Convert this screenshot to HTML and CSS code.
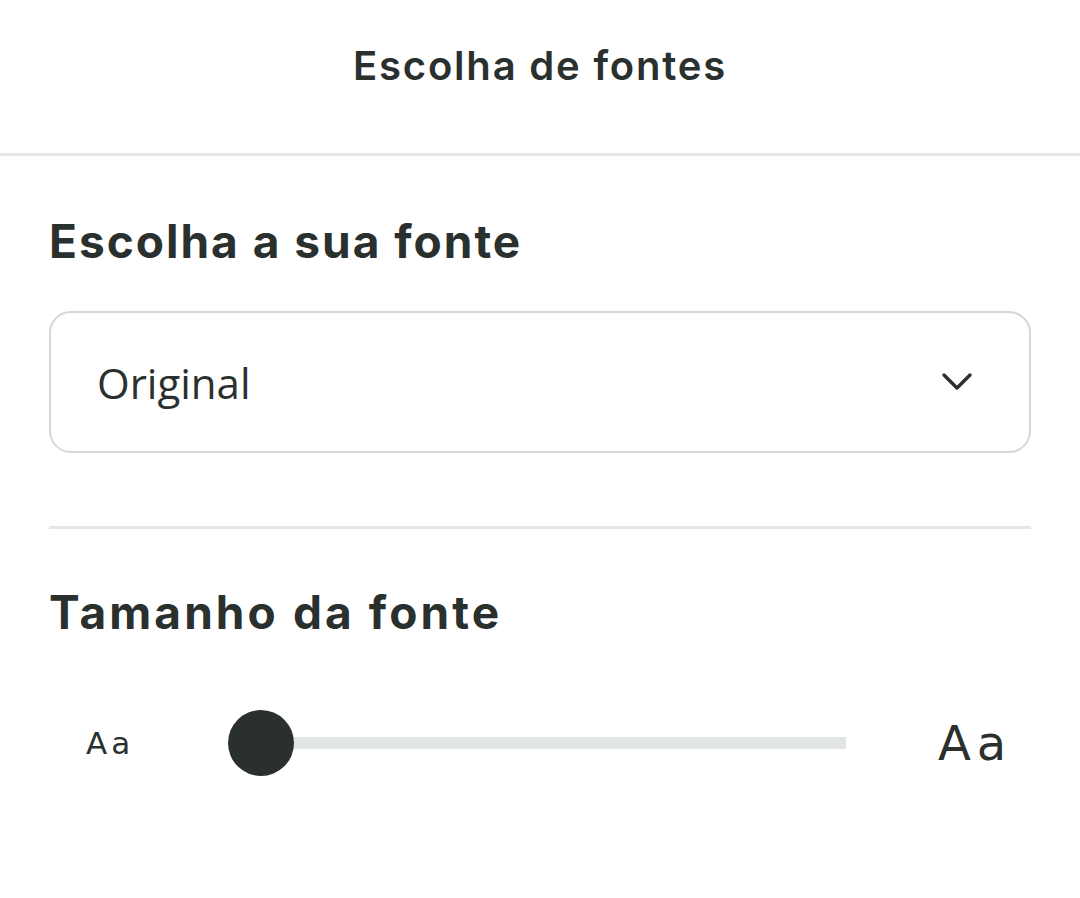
FILE: index.html
```html
<!DOCTYPE html>
<html lang="pt">
<head>
<meta charset="utf-8">
<title>Escolha de fontes</title>
<link rel="stylesheet" href="styles.css">
</head>
<body>
<header class="topbar">
  <h1 class="topbar-title">Escolha de fontes</h1>
</header>
<main class="content">
  <section class="section">
    <h2 class="section-title">Escolha a sua fonte</h2>
    <div class="select">
      <span class="select-value">Original</span>
      <svg class="select-chevron" width="32" height="20" viewBox="0 0 32 20" aria-hidden="true">
        <path d="M3 3 L16 16 L29 3" fill="none" stroke="#2a302e" stroke-width="3.4" stroke-linecap="round" stroke-linejoin="round"/>
      </svg>
    </div>
  </section>
  <hr class="divider">
  <section class="section">
    <h2 class="section-title title-size">Tamanho da fonte</h2>
    <div class="slider-row">
      <span class="aa aa-small">Aa</span>
      <div class="slider">
        <div class="slider-track"></div>
        <div class="slider-knob"></div>
      </div>
      <span class="aa aa-large">Aa</span>
    </div>
  </section>
</main>
</body>
</html>
```

FILE: styles.css
```css
* { box-sizing: border-box; }
html, body { margin: 0; padding: 0; background: #ffffff; }
body {
  width: 1080px;
  height: 898px;
  overflow: hidden;
  color: #2a302e;
  font-family: "Inter", "Noto Sans", sans-serif;
}
.topbar {
  height: 156px;
  border-bottom: 3px solid #e6e6e6;
  display: flex;
  justify-content: center;
  padding-top: 40px;
}
.topbar-title {
  margin: 0;
  font-size: 40px;
  line-height: 52px;
  font-weight: 600;
  letter-spacing: 1.8px;
}
.content {
  padding: 0 49px;
}
.section-title {
  margin: 0;
  font-size: 46px;
  font-weight: 700;
  line-height: 56px;
  letter-spacing: 2px;
}
.section:first-child .section-title { margin-top: 57px; }
.title-size { letter-spacing: 3.1px; margin-top: 55px; }
.select {
  margin-top: 42px;
  height: 142px;
  border: 2px solid #d6d6d6;
  border-radius: 22px;
  display: flex;
  align-items: center;
  justify-content: space-between;
  padding: 0 56px 0 46px;
}
.select-value {
  font-family: "Open Sans", sans-serif;
  font-size: 42px;
  color: #2a302e;
}
.select-chevron { display: block; }
.divider {
  margin: 73px 0 0;
  border: 0;
  height: 3px;
  background: #e6e6e6;
}
.slider-row {
  margin-top: 70px;
  display: flex;
  align-items: center;
  padding-left: 37px;
}
.aa {
  font-family: "DejaVu Sans", sans-serif;
  font-weight: 400;
  color: #2a302e;
}
.aa-small { font-size: 31px; letter-spacing: 4px; width: 142px; }
.aa-large { font-size: 48px; letter-spacing: 6px; margin-left: 92px; }
.slider {
  position: relative;
  width: 618px;
  height: 66px;
  display: flex;
  align-items: center;
}
.slider-track {
  margin-left: 40px;
  flex: 1;
  height: 12px;
  background: #e1e5e3;
}
.slider-knob {
  position: absolute;
  left: 0;
  top: 0;
  width: 66px;
  height: 66px;
  border-radius: 50%;
  background: #2a302e;
}
```
